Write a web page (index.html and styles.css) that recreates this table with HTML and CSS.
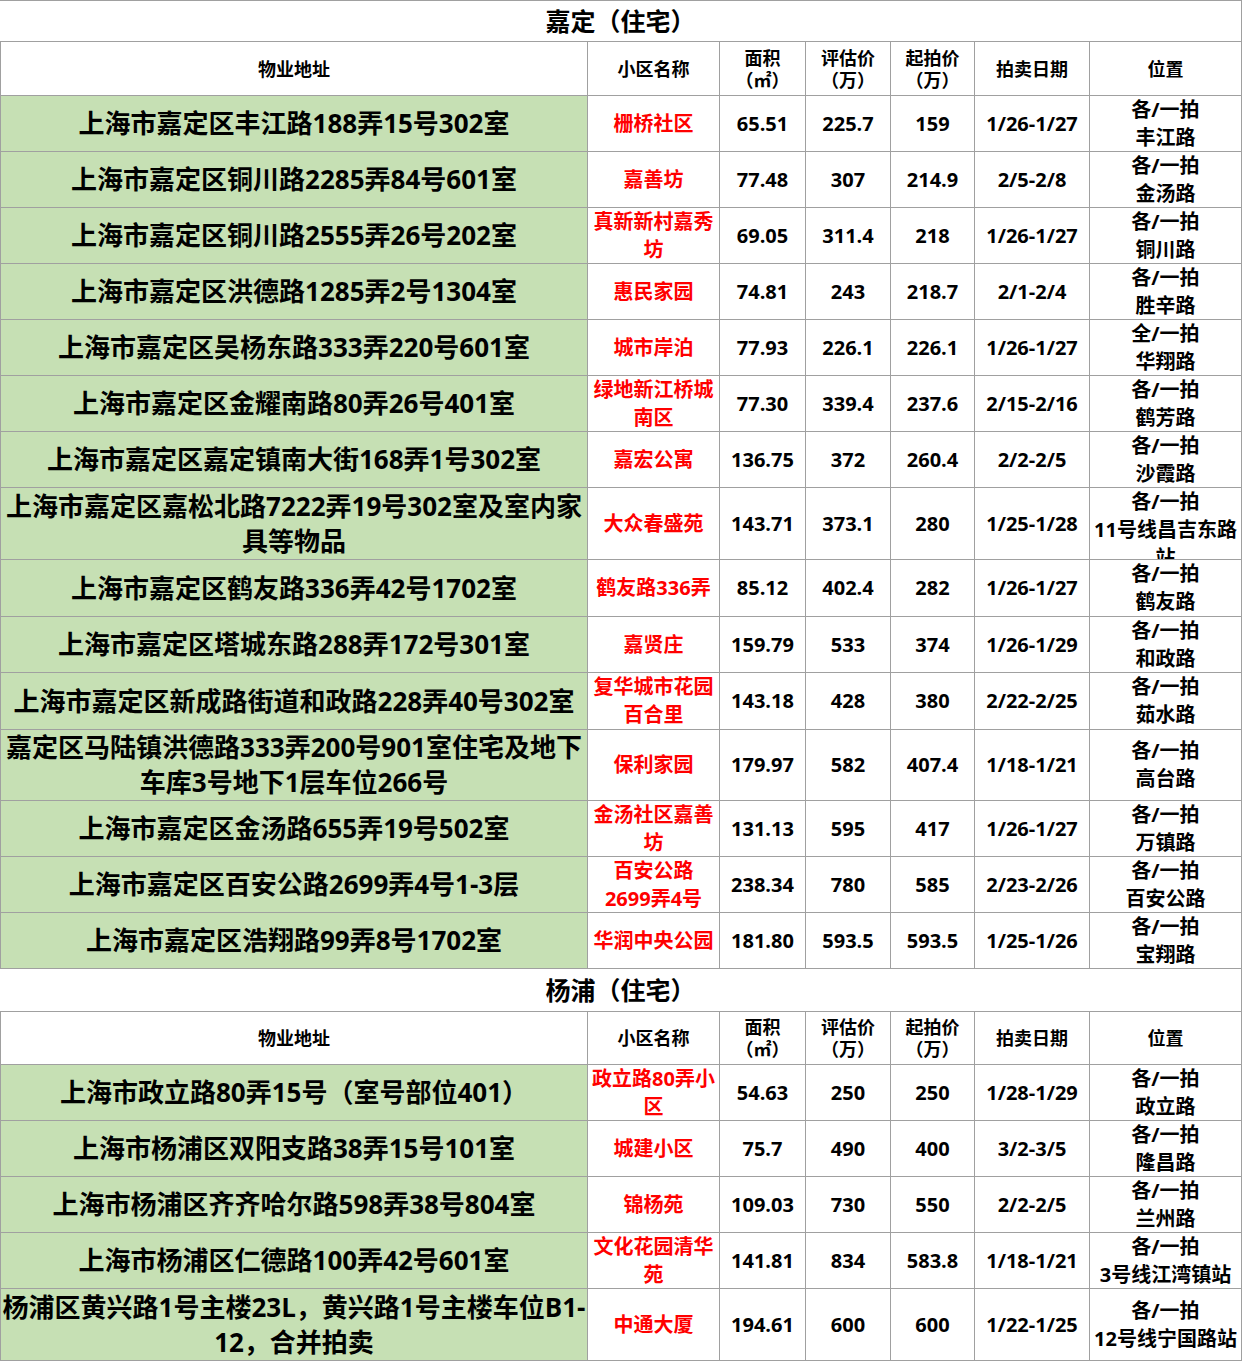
FILE: index.html
```html
<!DOCTYPE html>
<html lang="zh-CN">
<head>
<meta charset="utf-8">
<title>嘉定 杨浦 住宅拍卖</title>
<link rel="stylesheet" href="styles.css">
</head>
<body>
<div class="sheet">
  <div class="title first"><span>嘉定（住宅）</span></div>
  <div class="row head h54">
    <div class="c"><span>物业地址</span></div>
    <div class="c"><span>小区名称</span></div>
    <div class="c"><span>面积<br>（㎡）</span></div>
    <div class="c"><span>评估价<br>（万）</span></div>
    <div class="c"><span>起拍价<br>（万）</span></div>
    <div class="c"><span>拍卖日期</span></div>
    <div class="c"><span>位置</span></div>
  </div>
  <div class="row h56">
    <div class="c addr"><span>上海市嘉定区丰江路188弄15号302室</span></div>
    <div class="c name"><span>栅桥社区</span></div>
    <div class="c"><span>65.51</span></div>
    <div class="c"><span>225.7</span></div>
    <div class="c"><span>159</span></div>
    <div class="c"><span>1/26-1/27</span></div>
    <div class="c"><span>各/一拍<br>丰江路</span></div>
  </div>
  <div class="row h56">
    <div class="c addr"><span>上海市嘉定区铜川路2285弄84号601室</span></div>
    <div class="c name"><span>嘉善坊</span></div>
    <div class="c"><span>77.48</span></div>
    <div class="c"><span>307</span></div>
    <div class="c"><span>214.9</span></div>
    <div class="c"><span>2/5-2/8</span></div>
    <div class="c"><span>各/一拍<br>金汤路</span></div>
  </div>
  <div class="row h56">
    <div class="c addr"><span>上海市嘉定区铜川路2555弄26号202室</span></div>
    <div class="c name"><span>真新新村嘉秀<br>坊</span></div>
    <div class="c"><span>69.05</span></div>
    <div class="c"><span>311.4</span></div>
    <div class="c"><span>218</span></div>
    <div class="c"><span>1/26-1/27</span></div>
    <div class="c"><span>各/一拍<br>铜川路</span></div>
  </div>
  <div class="row h56">
    <div class="c addr"><span>上海市嘉定区洪德路1285弄2号1304室</span></div>
    <div class="c name"><span>惠民家园</span></div>
    <div class="c"><span>74.81</span></div>
    <div class="c"><span>243</span></div>
    <div class="c"><span>218.7</span></div>
    <div class="c"><span>2/1-2/4</span></div>
    <div class="c"><span>各/一拍<br>胜辛路</span></div>
  </div>
  <div class="row h56">
    <div class="c addr"><span>上海市嘉定区吴杨东路333弄220号601室</span></div>
    <div class="c name"><span>城市岸泊</span></div>
    <div class="c"><span>77.93</span></div>
    <div class="c"><span>226.1</span></div>
    <div class="c"><span>226.1</span></div>
    <div class="c"><span>1/26-1/27</span></div>
    <div class="c"><span>全/一拍<br>华翔路</span></div>
  </div>
  <div class="row h56">
    <div class="c addr"><span>上海市嘉定区金耀南路80弄26号401室</span></div>
    <div class="c name"><span>绿地新江桥城<br>南区</span></div>
    <div class="c"><span>77.30</span></div>
    <div class="c"><span>339.4</span></div>
    <div class="c"><span>237.6</span></div>
    <div class="c"><span>2/15-2/16</span></div>
    <div class="c"><span>各/一拍<br>鹤芳路</span></div>
  </div>
  <div class="row h56">
    <div class="c addr"><span>上海市嘉定区嘉定镇南大街168弄1号302室</span></div>
    <div class="c name"><span>嘉宏公寓</span></div>
    <div class="c"><span>136.75</span></div>
    <div class="c"><span>372</span></div>
    <div class="c"><span>260.4</span></div>
    <div class="c"><span>2/2-2/5</span></div>
    <div class="c"><span>各/一拍<br>沙霞路</span></div>
  </div>
  <div class="row h72">
    <div class="c addr"><span>上海市嘉定区嘉松北路7222弄19号302室及室内家<br>具等物品</span></div>
    <div class="c name"><span>大众春盛苑</span></div>
    <div class="c"><span>143.71</span></div>
    <div class="c"><span>373.1</span></div>
    <div class="c"><span>280</span></div>
    <div class="c"><span>1/25-1/28</span></div>
    <div class="c"><span>各/一拍<br>11号线昌吉东路<br>站</span></div>
  </div>
  <div class="row h57">
    <div class="c addr"><span>上海市嘉定区鹤友路336弄42号1702室</span></div>
    <div class="c name"><span>鹤友路336弄</span></div>
    <div class="c"><span>85.12</span></div>
    <div class="c"><span>402.4</span></div>
    <div class="c"><span>282</span></div>
    <div class="c"><span>1/26-1/27</span></div>
    <div class="c"><span>各/一拍<br>鹤友路</span></div>
  </div>
  <div class="row h56">
    <div class="c addr"><span>上海市嘉定区塔城东路288弄172号301室</span></div>
    <div class="c name"><span>嘉贤庄</span></div>
    <div class="c"><span>159.79</span></div>
    <div class="c"><span>533</span></div>
    <div class="c"><span>374</span></div>
    <div class="c"><span>1/26-1/29</span></div>
    <div class="c"><span>各/一拍<br>和政路</span></div>
  </div>
  <div class="row h57">
    <div class="c addr"><span>上海市嘉定区新成路街道和政路228弄40号302室</span></div>
    <div class="c name"><span>复华城市花园<br>百合里</span></div>
    <div class="c"><span>143.18</span></div>
    <div class="c"><span>428</span></div>
    <div class="c"><span>380</span></div>
    <div class="c"><span>2/22-2/25</span></div>
    <div class="c"><span>各/一拍<br>茹水路</span></div>
  </div>
  <div class="row h71">
    <div class="c addr"><span>嘉定区马陆镇洪德路333弄200号901室住宅及地下<br>车库3号地下1层车位266号</span></div>
    <div class="c name"><span>保利家园</span></div>
    <div class="c"><span>179.97</span></div>
    <div class="c"><span>582</span></div>
    <div class="c"><span>407.4</span></div>
    <div class="c"><span>1/18-1/21</span></div>
    <div class="c"><span>各/一拍<br>高台路</span></div>
  </div>
  <div class="row h56">
    <div class="c addr"><span>上海市嘉定区金汤路655弄19号502室</span></div>
    <div class="c name"><span>金汤社区嘉善<br>坊</span></div>
    <div class="c"><span>131.13</span></div>
    <div class="c"><span>595</span></div>
    <div class="c"><span>417</span></div>
    <div class="c"><span>1/26-1/27</span></div>
    <div class="c"><span>各/一拍<br>万镇路</span></div>
  </div>
  <div class="row h56">
    <div class="c addr"><span>上海市嘉定区百安公路2699弄4号1-3层</span></div>
    <div class="c name"><span>百安公路<br>2699弄4号</span></div>
    <div class="c"><span>238.34</span></div>
    <div class="c"><span>780</span></div>
    <div class="c"><span>585</span></div>
    <div class="c"><span>2/23-2/26</span></div>
    <div class="c"><span>各/一拍<br>百安公路</span></div>
  </div>
  <div class="row h56">
    <div class="c addr"><span>上海市嘉定区浩翔路99弄8号1702室</span></div>
    <div class="c name"><span>华润中央公园</span></div>
    <div class="c"><span>181.80</span></div>
    <div class="c"><span>593.5</span></div>
    <div class="c"><span>593.5</span></div>
    <div class="c"><span>1/25-1/26</span></div>
    <div class="c"><span>各/一拍<br>宝翔路</span></div>
  </div>

  <div class="title second"><span>杨浦（住宅）</span></div>
  <div class="row head h53">
    <div class="c"><span>物业地址</span></div>
    <div class="c"><span>小区名称</span></div>
    <div class="c"><span>面积<br>（㎡）</span></div>
    <div class="c"><span>评估价<br>（万）</span></div>
    <div class="c"><span>起拍价<br>（万）</span></div>
    <div class="c"><span>拍卖日期</span></div>
    <div class="c"><span>位置</span></div>
  </div>
  <div class="row h56">
    <div class="c addr"><span>上海市政立路80弄15号（室号部位401）</span></div>
    <div class="c name"><span>政立路80弄小<br>区</span></div>
    <div class="c"><span>54.63</span></div>
    <div class="c"><span>250</span></div>
    <div class="c"><span>250</span></div>
    <div class="c"><span>1/28-1/29</span></div>
    <div class="c"><span>各/一拍<br>政立路</span></div>
  </div>
  <div class="row h56">
    <div class="c addr"><span>上海市杨浦区双阳支路38弄15号101室</span></div>
    <div class="c name"><span>城建小区</span></div>
    <div class="c"><span>75.7</span></div>
    <div class="c"><span>490</span></div>
    <div class="c"><span>400</span></div>
    <div class="c"><span>3/2-3/5</span></div>
    <div class="c"><span>各/一拍<br>隆昌路</span></div>
  </div>
  <div class="row h56">
    <div class="c addr"><span>上海市杨浦区齐齐哈尔路598弄38号804室</span></div>
    <div class="c name"><span>锦杨苑</span></div>
    <div class="c"><span>109.03</span></div>
    <div class="c"><span>730</span></div>
    <div class="c"><span>550</span></div>
    <div class="c"><span>2/2-2/5</span></div>
    <div class="c"><span>各/一拍<br>兰州路</span></div>
  </div>
  <div class="row h56">
    <div class="c addr"><span>上海市杨浦区仁德路100弄42号601室</span></div>
    <div class="c name"><span>文化花园清华<br>苑</span></div>
    <div class="c"><span>141.81</span></div>
    <div class="c"><span>834</span></div>
    <div class="c"><span>583.8</span></div>
    <div class="c"><span>1/18-1/21</span></div>
    <div class="c"><span>各/一拍<br>3号线江湾镇站</span></div>
  </div>
  <div class="row h72">
    <div class="c addr"><span>杨浦区黄兴路1号主楼23L，黄兴路1号主楼车位B1-<br>12，合并拍卖</span></div>
    <div class="c name"><span>中通大厦</span></div>
    <div class="c"><span>194.61</span></div>
    <div class="c"><span>600</span></div>
    <div class="c"><span>600</span></div>
    <div class="c"><span>1/22-1/25</span></div>
    <div class="c"><span>各/一拍<br>12号线宁国路站</span></div>
  </div>
</div>
</body>
</html>
```

FILE: styles.css
```css
html, body {
  margin: 0;
  padding: 0;
  background: #ffffff;
}

body {
  font-family: "Open Sans", "Noto Sans CJK SC", sans-serif;
  font-weight: 700;
  color: #000000;
}

.sheet {
  width: 1242px;
}

.title {
  display: flex;
  align-items: center;
  justify-content: center;
  box-sizing: border-box;
  font-size: 25px;
  line-height: 32px;
  border-bottom: 1px solid #a0a0a0;
  border-right: 1px solid #a0a0a0;
}

.title.first {
  height: 42px;
  border-top: 1px solid #a0a0a0;
}

.title.second {
  height: 43px;
}

.row {
  display: grid;
  grid-template-columns: 588px 132px 86px 85px 84px 115px 152px;
}

.h53 { grid-template-rows: 53px; }
.h54 { grid-template-rows: 54px; }
.h56 { grid-template-rows: 56px; }
.h57 { grid-template-rows: 57px; }
.h71 { grid-template-rows: 71px; }
.h72 { grid-template-rows: 72px; }

.c {
  display: flex;
  overflow: hidden;
  box-sizing: border-box;
  border-right: 1px solid #a0a0a0;
  border-bottom: 1px solid #a0a0a0;
  font-size: 20px;
  line-height: 28px;
}

.c > span {
  margin: auto;
  text-align: center;
  white-space: nowrap;
}

.row > .c:first-child {
  border-left: 1px solid #a0a0a0;
}

.head .c {
  font-size: 18px;
  line-height: 22px;
}

.addr {
  background: #c6e0b4;
  font-size: 26px;
  line-height: 35px;
}

.name {
  color: #ff0000;
}
```
